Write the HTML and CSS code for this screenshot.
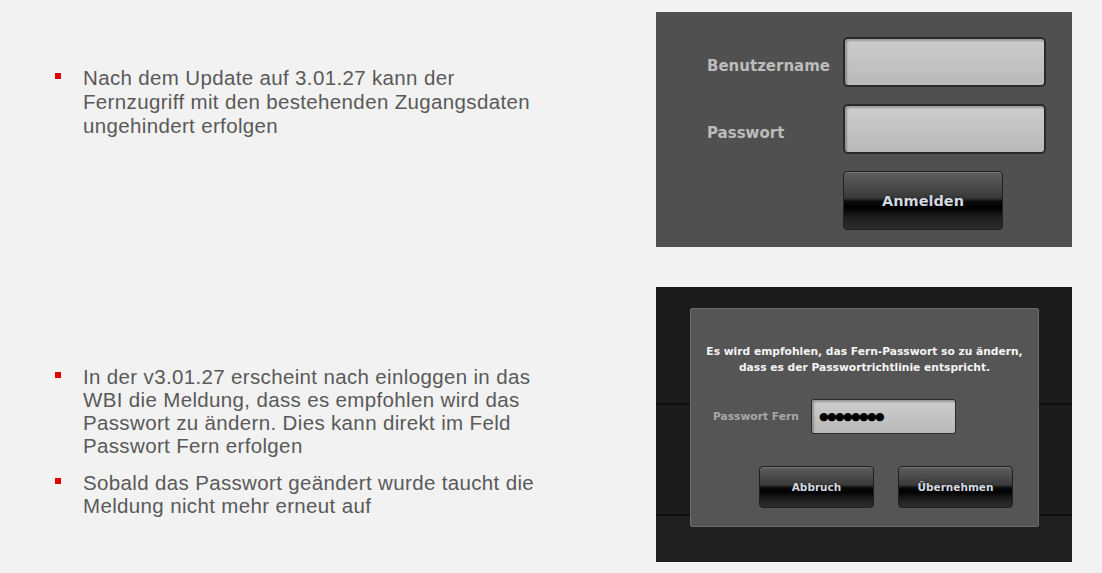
FILE: index.html
```html
<!DOCTYPE html>
<html lang="de">
<head>
    <meta charset="UTF-8">
    <meta name="viewport" content="width=device-width, initial-scale=1.0">
    <title>Fernzugriff nach Update 3.01.27</title>
    <link rel="stylesheet" href="styles.css">
</head>
<body>
    <div class="slide">
        <section class="row row-login">
            <ul class="notes">
                <li>Nach dem Update auf 3.01.27 kann der Fernzugriff mit den bestehenden Zugangsdaten ungehindert erfolgen</li>
            </ul>

            <div class="panel panel-login">
                <div class="login-grid">
                    <label class="field-label" for="user">Benutzername</label>
                    <div class="field" id="user"></div>

                    <label class="field-label" for="pass">Passwort</label>
                    <div class="field" id="pass"></div>

                    <span></span>
                    <button class="gloss-btn btn-big">Anmelden</button>
                </div>
            </div>
        </section>

        <section class="row row-dialog">
            <ul class="notes">
                <li>In der v3.01.27 erscheint nach einloggen in das WBI die Meldung, dass es empfohlen wird das Passwort zu ändern. Dies kann direkt im Feld Passwort Fern erfolgen</li>
                <li>Sobald das Passwort geändert wurde taucht die Meldung nicht mehr erneut auf</li>
            </ul>

            <div class="panel panel-dark">
                <div class="dialog">
                    <p class="dialog-msg">Es wird empfohlen, das Fern-Passwort so zu ändern,<br>dass es der Passwortrichtlinie entspricht.</p>
                    <div class="dialog-field">
                        <label class="small-label" for="fern">Passwort Fern</label>
                        <div class="field field-small" id="fern">&#9679;&#9679;&#9679;&#9679;&#9679;&#9679;&#9679;&#9679;</div>
                    </div>
                    <div class="dialog-actions">
                        <button class="gloss-btn btn-small">Abbruch</button>
                        <button class="gloss-btn btn-small">Übernehmen</button>
                    </div>
                </div>
            </div>
        </section>
    </div>
</body>
</html>
```

FILE: styles.css
```css
:root {
    --page-bg: #f2f2f2;
    --text-color: #595959;
    --bullet-color: #e00000;
    --panel-gray: #505050;
    --panel-dark: #1b1b1b;
    --ui-font: "DejaVu Sans", Verdana, sans-serif;
}

body {
    margin: 0;
    background: var(--page-bg);
    font-family: "Liberation Sans", Arial, sans-serif;
    color: var(--text-color);
}

.slide {
    width: 1102px;
    height: 573px;
    padding-top: 12px;
    box-sizing: border-box;
}

.row {
    display: flex;
    align-items: flex-start;
}

.row-dialog {
    margin-top: 40px;
}

/* bullet text */
.notes {
    width: 656px;
    flex-shrink: 0;
    margin: 0;
    padding: 0 111px 0 83px;
    box-sizing: border-box;
    list-style: none;
    font-size: 20.5px;
    letter-spacing: 0.35px;
    line-height: 23px;
}

.row-login .notes {
    padding-top: 54px;
    line-height: 24px;
}

.row-dialog .notes {
    padding-top: 78px;
}

.notes li {
    position: relative;
    margin-bottom: 14px;
}

.notes li::before {
    content: "";
    position: absolute;
    left: -28px;
    top: 7px;
    width: 6px;
    height: 6px;
    background: var(--bullet-color);
}

/* screenshots */
.panel {
    width: 416px;
    flex-shrink: 0;
    box-sizing: border-box;
    font-family: var(--ui-font);
    font-weight: bold;
}

.panel-login {
    height: 235px;
    background: var(--panel-gray);
    padding: 25px 0 0 51px;
}

.login-grid {
    display: grid;
    grid-template-columns: 136px 203px;
    grid-template-rows: 50px 50px 59px;
    row-gap: 17px;
    align-items: center;
}

.field-label {
    margin-top: 8px;
    color: #bcbcbc;
    font-size: 15px;
}

.field {
    box-sizing: border-box;
    height: 100%;
    border: 2px solid #2a2a2a;
    border-radius: 5px;
    background: linear-gradient(#cdcdcd, #b9b9b9);
    box-shadow: inset 2px 2px 2px rgba(0, 0, 0, 0.25);
}

.gloss-btn {
    box-sizing: border-box;
    border: 1px solid #1e1e1e;
    border-radius: 4px;
    background: linear-gradient(#5e5e5e 0%, #3a3a3a 45%, #0a0a0a 52%, #000 62%, #1c1c1c 78%, #2e2e2e 100%);
    box-shadow: inset 0 1px 0 rgba(255, 255, 255, 0.15);
    color: #d2d9e0;
    font-family: var(--ui-font);
    font-weight: bold;
    text-shadow: 0 0 2px rgba(0, 0, 0, 0.6);
    padding: 0;
    cursor: pointer;
}

.btn-big {
    width: 160px;
    height: 59px;
    font-size: 14.5px;
}

.panel-dark {
    height: 275px;
    padding: 21px 0 0 34px;
    background:
        linear-gradient(to bottom, transparent 116px, #0e0e0e 116px, #0e0e0e 118px, transparent 118px),
        linear-gradient(to bottom, var(--panel-dark) 227px, #0e0e0e 227px, #0e0e0e 229px, #202020 229px);
}

.dialog {
    width: 349px;
    height: 219px;
    box-sizing: border-box;
    background: #555;
    border: 1px solid #6c6c6c;
    border-radius: 2px;
    padding-top: 35px;
}

.dialog-msg {
    margin: 0;
    text-align: center;
    color: #f4f4f4;
    font-size: 10.7px;
    line-height: 16px;
}

.dialog-field {
    display: flex;
    align-items: center;
    margin-top: 23px;
    padding-left: 22px;
    height: 35px;
}

.small-label {
    width: 98px;
    color: #a8a8a8;
    font-size: 10.7px;
}

.field-small {
    width: 145px;
    border-width: 1px;
    border-radius: 3px;
    padding-left: 7px;
    color: #000;
    font-family: "DejaVu Sans", sans-serif;
    font-size: 11px;
    letter-spacing: -1.6px;
    line-height: 33px;
}

.dialog-actions {
    display: flex;
    gap: 24px;
    margin-top: 32px;
    padding-left: 68px;
}

.btn-small {
    width: 115px;
    height: 42px;
    font-size: 10.5px;
}
```
